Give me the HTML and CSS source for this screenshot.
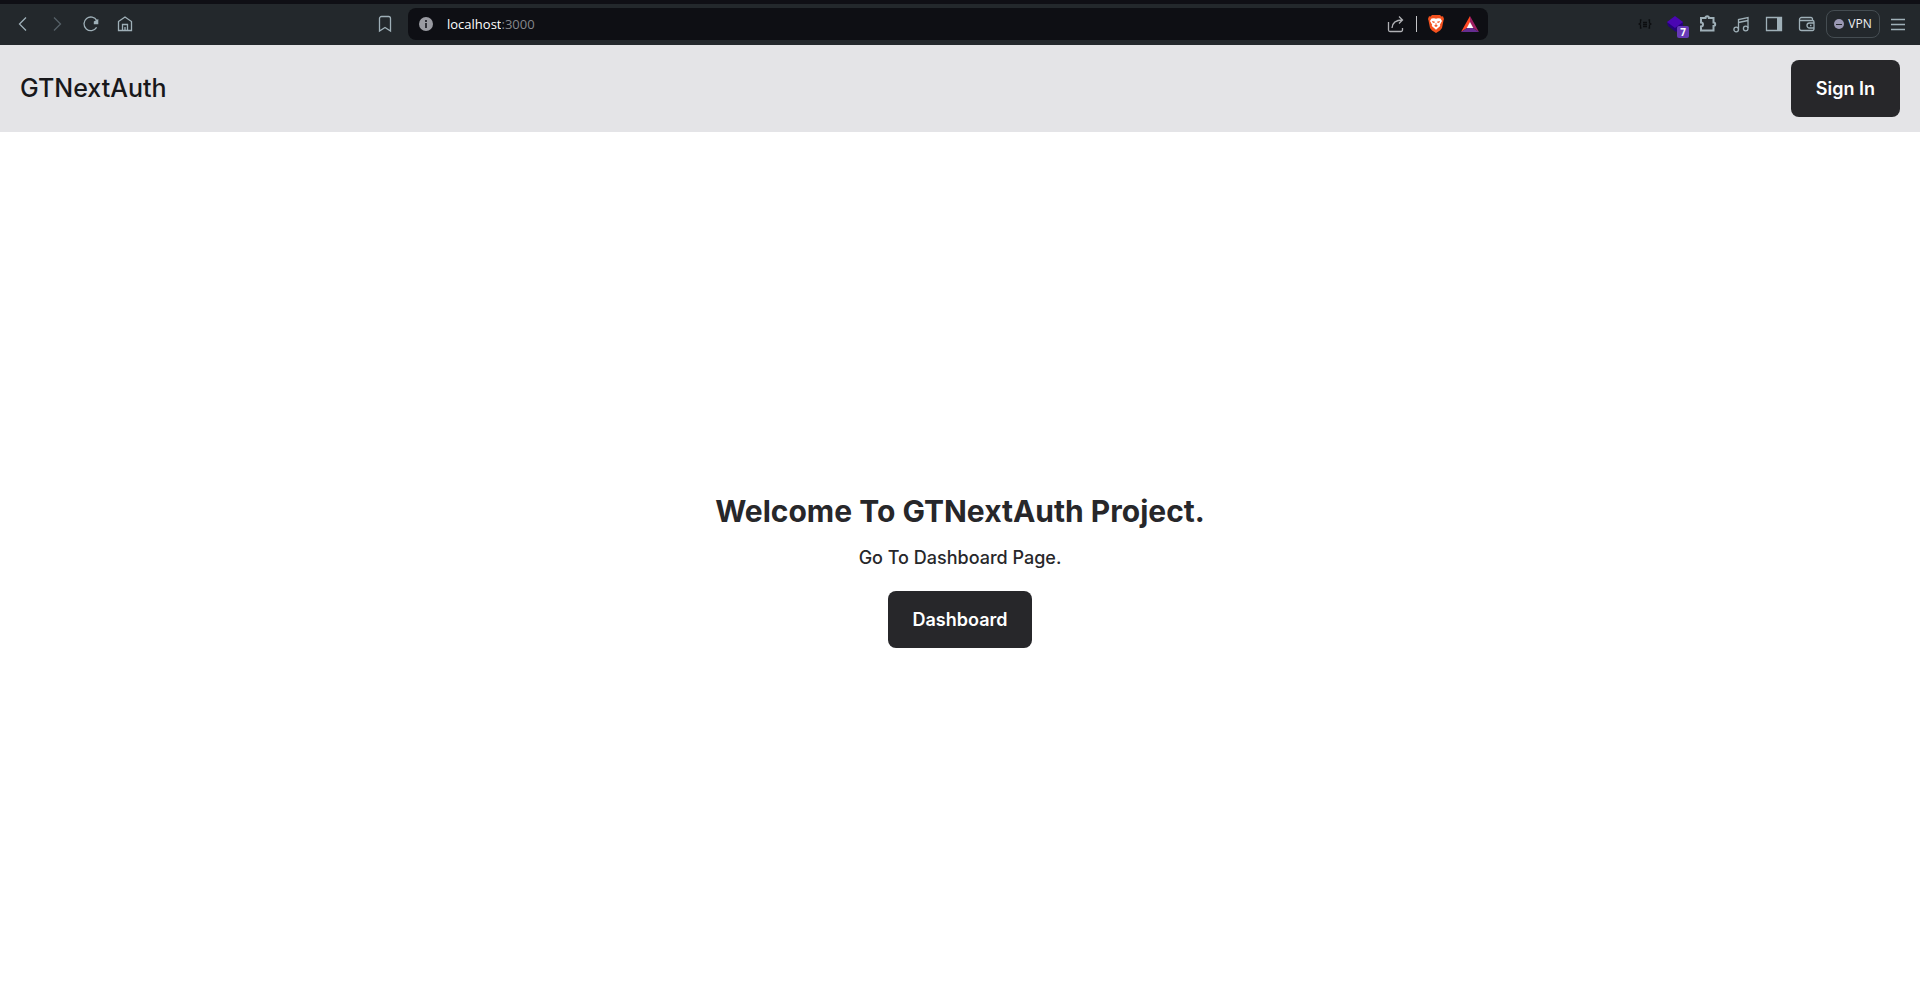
FILE: index.html
```html
<!DOCTYPE html>
<html lang="en">
<head>
<meta charset="utf-8">
<meta name="viewport" content="width=device-width, initial-scale=1">
<title>GTNextAuth</title>
<link rel="stylesheet" href="styles.css">
</head>
<body>
<div class="toolbar">
  <div class="toolbar-start">
    <button class="tool" type="button" aria-label="Back"><svg width="18" height="18" viewBox="0 0 18 18"><path d="M12 2.5 5.5 9l6.500 6.500"/></svg></button>
    <button class="tool tool-off" type="button" aria-label="Forward"><svg width="18" height="18" viewBox="0 0 18 18"><path d="M6 2.500 12.500 9 6 15.500"/></svg></button>
    <button class="tool" type="button" aria-label="Reload"><svg width="18" height="18" viewBox="0 0 18 18"><path d="M14.600 12.400A6.800 6.800 0 1 1 14.800 5.600"/><path class="fill" d="M16.300 4v5.300H11.800V6.600Z"/></svg></button>
    <button class="tool" type="button" aria-label="Home"><svg width="18" height="18" viewBox="0 0 18 18"><path d="M2.500 6.500 9 2l6.500 4.500v9h-13Z"/><path d="M6.500 15.500V9.500h5v6M9 15.500V12"/></svg></button>
    <button class="tool tool-bookmark" type="button" aria-label="Bookmark this page"><svg width="18" height="18" viewBox="0 0 18 18"><path d="M3.500 3.500a2 2 0 0 1 2-2h7a2 2 0 0 1 2 2v12.500L9 12.500 3.500 16Z"/></svg></button>
  </div>
  <div class="address">
    <svg class="info" width="14" height="14" viewBox="0 0 14 14" aria-hidden="true"><circle cx="7" cy="7" r="7" fill="#9a9ba2"/><path d="M7 3v2M7 6v5" stroke="#303138" stroke-width="2"/></svg>
    <div class="url"><input class="url-input" type="text" aria-label="Address" value="localhost"><span class="url-port">:3000</span></div>
    <button class="tool tool-share" type="button" aria-label="Share"><svg width="18" height="18" viewBox="0 0 18 18"><path d="M1.500 7v8a1.500 1.500 0 0 0 1.500 1.500h11a1.500 1.500 0 0 0 1.500-1.500v-2"/><path d="M5 13c.3-5 3.500-8 10.500-8M12 1.500 15.500 5 12 8.500"/></svg></button>
    <span class="divider"></span>
    <button class="tool" type="button" aria-label="Brave Shields"><svg class="art" width="16" height="18" viewBox="0 0 16 18"><path fill="#f4511e" d="M4 0h8l1.500 1.500L15 1.300 16 4l-.5 1.500L14 13l-2 2.500L8 18l-4-2.500L2 13 .5 5.500 0 4l1-2.700 1.500.2Z"/><path fill="#fff" d="M3.500 3.500 6 3.200l2 .6 2-.6 2.500.3L14 6l-2 3.500.2 1.500L8 14.800 3.800 11l.2-1.500L2 6Z"/><path fill="#f4511e" d="m4 6 3 .7-.8 1.300L4.600 7.500Zm8 0-3 .7.800 1.300 1.600-.5ZM7.700 8h.6l.2 2L10 10.800 8 12l-2-1.200L7.500 10Z"/></svg></button>
    <button class="tool" type="button" aria-label="Brave Rewards"><svg class="art" width="18" height="16" viewBox="0 0 18 16"><path fill="#ff4724" d="M9 0 0 16l6-4 3-5Z"/><path fill="#9e1f63" d="m9 0 9 16-6-4-3-5Z"/><path fill="#662d91" d="m0 16 6-4h6l6 4Z"/><path fill="#fff" d="m9 6 3.300 6H5.700Z"/></svg></button>
  </div>
  <div class="toolbar-end">
    <button class="tool tool-dark" type="button" aria-label="JSON viewer"><svg width="14" height="10" viewBox="0 0 14 10"><path d="M3.500 1H2.500v3L1 5l1.500 1v3h1M10.500 1h1v3L13 5l-1.500 1v3h-1M5 3.500h4M5 5.500h4M5 7.500h4"/></svg></button>
    <button class="tool tool-badged" type="button" aria-label="Extension, 7 items"><svg class="art" width="18" height="18" viewBox="0 0 18 18"><path fill="#25027a" d="m1 7 1 4 8 6 7-5V7Z"/><path fill="#4a06b2" d="M9 1 17 7l-8 6-8-6Z"/></svg><span class="badge">7</span></button>
    <button class="tool tool-bold" type="button" aria-label="Extensions"><svg width="18" height="18" viewBox="0 0 18 18"><path d="M2 3h4.500a1.700 1.700 0 0 1 3.400 0h4.600v4.500a1.700 1.700 0 0 1 0 3.400V15.500H2v-4a2 2 0 0 0 0-4Z"/></svg></button>
    <button class="tool" type="button" aria-label="Playlist"><svg width="18" height="18" viewBox="0 0 18 18"><path d="M6.500 14.500V4.500l9.500-2v10.500M6.500 7.500l9.500-2"/><circle cx="4.200" cy="14.500" r="2.300"/><circle cx="13.700" cy="13.500" r="2.300"/></svg></button>
    <button class="tool" type="button" aria-label="Sidebar"><svg width="18" height="18" viewBox="0 0 18 18"><path d="M1.500 2.500h15v13h-15Z"/><path class="fill" d="M12 2h5v14h-5Z"/></svg></button>
    <button class="tool" type="button" aria-label="Wallet"><svg width="18" height="18" viewBox="0 0 18 18"><path d="M14.500 5.500v-1.500a1.500 1.500 0 0 0-1.500-1.500H3.500a2 2 0 0 0-2 2v9a2 2 0 0 0 2 2h11a1.500 1.500 0 0 0 1.500-1.500V7a1.500 1.500 0 0 0-1.500-1.500H2"/><path d="M16 8h-4.500a2.500 2.500 0 0 0 0 5H16M12 10.500h1.500"/></svg></button>
    <button class="vpn" type="button"><svg width="10" height="10" viewBox="0 0 10 10" aria-hidden="true"><circle cx="5" cy="5" r="5" fill="#9a98b3"/><path d="M2 5.500h6" stroke="#23282c" stroke-width="1"/></svg>VPN</button>
    <button class="tool" type="button" aria-label="Menu"><svg width="18" height="18" viewBox="0 0 18 18"><path d="M2 4.500h14M2 9.500h14M2 14.500h14"/></svg></button>
  </div>
</div>
<header class="header">
  <a class="brand" href="#">GTNextAuth</a>
  <button class="button" type="button">Sign In</button>
</header>
<main class="main">
  <h1 class="title">Welcome To GTNextAuth Project.</h1>
  <p class="lead">Go To Dashboard Page.</p>
  <button class="button" type="button">Dashboard</button>
</main>
</body>
</html>
```

FILE: styles.css
```css
* {
  box-sizing: border-box;
}

body {
  margin: 0;
  min-height: 100vh;
  display: flex;
  flex-direction: column;
  background: #fff;
  color: #27272a;
  font-family: Inter, sans-serif;
  line-height: 1.5;
}

button,
input {
  margin: 0;
  padding: 0;
  border: 0;
  background: none;
  font: inherit;
}

button {
  cursor: pointer;
}

/* Browser toolbar */
.toolbar {
  display: flex;
  align-items: center;
  border-top: 4px solid #0f0f15;
  padding: 4px 0 5px;
  background: #23282c;
  font-family: "Open Sans", sans-serif;
}

.toolbar-start,
.toolbar-end {
  display: flex;
  align-items: center;
  flex: none;
}

.toolbar-start {
  width: 408px;
  padding: 0 6px;
}

.toolbar-end {
  width: 432px;
  padding-right: 6px;
  justify-content: flex-end;
}

.tool {
  display: flex;
  align-items: center;
  justify-content: center;
  width: 34px;
  height: 32px;
  color: #9fb0b8;
}

.toolbar-end .tool {
  width: 33px;
}

.tool svg {
  fill: none;
  stroke: currentColor;
  stroke-width: 1.3;
}

.tool .art {
  stroke: none;
}

.tool .fill {
  fill: currentColor;
  stroke: none;
}

.tool-off {
  color: #566067;
}

.toolbar-end .tool-dark {
  width: 26px;
  color: #0c0e10;
}

.tool-bold svg {
  stroke-width: 2;
}

.tool-bookmark {
  margin-left: auto;
}

.tool-share {
  color: #b0b1b5;
}

.tool-badged {
  position: relative;
}

.badge {
  position: absolute;
  right: 2px;
  bottom: 2px;
  width: 12px;
  border-radius: 2px;
  background: #673ab7;
  color: #fff;
  font-size: 10px;
  font-weight: 700;
  line-height: 12px;
  text-align: center;
}

.address {
  display: flex;
  align-items: center;
  flex: 1;
  height: 32px;
  padding: 0 1px 0 11px;
  border-radius: 8px;
  background: #0e0f14;
}

.info {
  flex: none;
}

.url {
  display: flex;
  align-items: center;
  flex: 1;
  margin-left: 14px;
  font-size: 13px;
  line-height: 18px;
}

.url-input {
  field-sizing: content;
  color: #fff;
  outline: 0;
}

.url-port {
  color: #85878c;
}

.divider {
  width: 1px;
  height: 16px;
  margin: 0 2px 0 3px;
  background: #c4c5c8;
}

.vpn {
  display: flex;
  align-items: center;
  justify-content: center;
  gap: 4px;
  width: 54px;
  height: 28px;
  margin: 0 1px 0 3px;
  border: 1px solid #454d52;
  border-radius: 8px;
  color: #f0f1f3;
  font-size: 12px;
}

/* Page */
.header {
  display: flex;
  align-items: center;
  justify-content: space-between;
  padding: 15px 20px;
  background: #e4e4e7;
}

.brand {
  color: #18181b;
  font-size: 25px;
  font-weight: 500;
  text-decoration: none;
}

.button {
  padding: 15px 25px;
  border-radius: 8px;
  background: #27272a;
  color: #fff;
  font-size: 18px;
  font-weight: 600;
}

.main {
  display: flex;
  flex: 1;
  flex-direction: column;
  align-items: center;
  justify-content: center;
  padding-top: 4px;
}

.title {
  margin: 0;
  font-size: 30px;
  font-weight: 700;
}

.lead {
  margin: 10px 0 20px;
  font-size: 18px;
  font-weight: 500;
}
```
